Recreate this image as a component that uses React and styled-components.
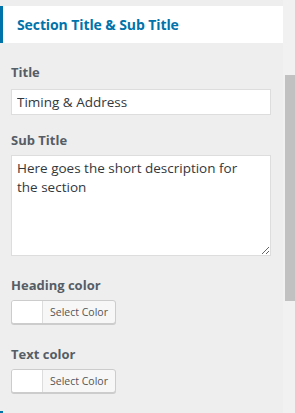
import React from "react";
import styled, { createGlobalStyle } from "styled-components";

const GlobalStyle = createGlobalStyle`
  html, body {
    margin: 0;
    padding: 0;
    background: #eeeeee;
    font-family: "Open Sans", "Noto Sans", sans-serif;
  }
`;

const Page = styled.div`
  display: flex;
  width: 295px;
  height: 413px;
  overflow: hidden;
  background: #eeeeee;
`;

const Panel = styled.div`
  width: 283px;
  padding-top: 6px;
  display: flex;
  flex-direction: column;
`;

const SectionHeader = styled.h3`
  margin: 0;
  height: 42px;
  box-sizing: border-box;
  background: #fff;
  border-left: 3px solid #0073aa;
  padding: 0 0 0 14px;
  display: flex;
  align-items: center;
  font-size: 14px;
  font-weight: 700;
  color: #0073aa;
  letter-spacing: -0.1px;
`;

const Controls = styled.div`
  padding: 20px 12px 0 11px;
  display: flex;
  flex-direction: column;
`;

const Field = styled.div`
  display: flex;
  flex-direction: column;
  margin-bottom: ${(p) => p.gap || 14}px;
`;

const Label = styled.label`
  font-size: 13px;
  font-weight: 700;
  color: #555d66;
  line-height: 18px;
  margin-bottom: ${(p) => p.space || 7}px;
`;

const TextInput = styled.input`
  box-sizing: border-box;
  width: 260px;
  height: 26px;
  margin: 0;
  padding: 0 5px;
  border: 1px solid #dddddd;
  background: #fff;
  font-family: inherit;
  font-size: 13.5px;
  color: #32373c;
  outline: none;
`;

const TextArea = styled.textarea`
  box-sizing: border-box;
  width: 260px;
  height: 101px;
  margin: 0;
  padding: 3px 20px 3px 5px;
  border: 1px solid #dddddd;
  background: #fff;
  font-family: inherit;
  font-size: 13.5px;
  line-height: 19px;
  color: #32373c;
  outline: none;
`;

const ColorButton = styled.button`
  display: inline-flex;
  align-items: stretch;
  box-sizing: border-box;
  width: 105px;
  height: 24px;
  padding: 0;
  border: 1px solid #cccccc;
  border-radius: 3px;
  background: #f7f7f7;
  box-shadow: 0 1px 0 #cccccc;
  overflow: hidden;
  cursor: pointer;
`;

const Swatch = styled.span`
  width: 30px;
  background: ${(p) => p.color};
  border-right: 1px solid #dddddd;
`;

const ButtonText = styled.span`
  flex: 1;
  display: flex;
  align-items: center;
  justify-content: center;
  font-family: "Open Sans", "Noto Sans", sans-serif;
  font-size: 10.5px;
  color: #555555;
`;

const NextHeader = styled.div`
  margin-top: auto;
  height: 2px;
  border-left: 3px solid #0073aa;
`;

const Scrollbar = styled.div`
  width: 12px;
  background: #f1f1f1;
  padding-top: 75px;
  display: flex;
  justify-content: flex-end;
`;

const Thumb = styled.div`
  width: 10px;
  height: 226px;
  background: #c1c1c1;
`;

function ColorPicker({ color = "#fff" }) {
  return (
    <ColorButton type="button">
      <Swatch color={color} />
      <ButtonText>Select Color</ButtonText>
    </ColorButton>
  );
}

export default function App() {
  return (
    <>
      <GlobalStyle />
      <Page>
        <Panel>
          <SectionHeader>Section Title &amp; Sub Title</SectionHeader>
          <Controls>
            <Field gap={16}>
              <Label space={8}>Title</Label>
              <TextInput defaultValue="Timing & Address" />
            </Field>
            <Field gap={20}>
              <Label space={6}>Sub Title</Label>
              <TextArea defaultValue="Here goes the short description for the section" />
            </Field>
            <Field gap={17}>
              <Label space={6}>Heading color</Label>
              <div>
                <ColorPicker />
              </div>
            </Field>
            <Field>
              <Label space={6}>Text color</Label>
              <div>
                <ColorPicker />
              </div>
            </Field>
          </Controls>
          <NextHeader />
        </Panel>
        <Scrollbar>
          <Thumb />
        </Scrollbar>
      </Page>
    </>
  );
}
